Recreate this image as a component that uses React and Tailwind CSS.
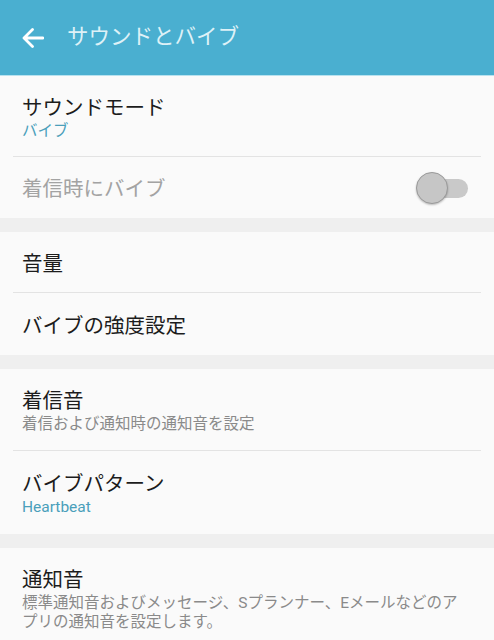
import { useState } from 'react';

const font = { fontFamily: '"Roboto", "Noto Sans CJK JP", sans-serif' };

function Row({ title, sub, subAccent, last, dim, h, children }) {
  return (
    <div className="px-[13px]">
      <div
        className={`flex items-center justify-between ${last ? '' : 'border-b border-[#e3e3e3]'} ${h}`}
      >
        <div className="px-[9px] pt-[3px]">
          <div className={`text-[20.5px] leading-[26px] ${dim ? 'text-[#a3a3a3]' : 'text-[#1c1c1c]'}`}>{title}</div>
          {sub && (
            <div
              className={`text-[15.5px] leading-[19px] mt-[1px] ${subAccent ? 'text-[#4a9fba]' : 'text-[#8a8a8a]'}`}
            >
              {sub}
            </div>
          )}
        </div>
        {children}
      </div>
    </div>
  );
}

function Toggle({ on, onChange }) {
  return (
    <button onClick={() => onChange(!on)} className="relative w-[52px] h-[34px] mr-[13px] shrink-0">
      <span className="absolute left-[15px] right-0 top-[8px] h-[19px] rounded-full bg-[#c9c9c9]" />
      <span className="absolute left-0 top-[1px] w-[32px] h-[32px] rounded-full bg-[#c6c6c6] border border-[#9a9a9a] shadow-[0_1px_2px_rgba(0,0,0,0.25)]" />
    </button>
  );
}

export default function App() {
  const [vibe, setVibe] = useState(false);

  return (
    <div className="w-[494px] h-[640px] overflow-hidden bg-[#efefef]" style={font}>
      <header className="h-[75px] bg-[#4aafd0] flex items-center border-b border-[#b8e2ef] box-content">
        <svg width="22" height="20" viewBox="0 0 22 20" className="ml-[22px]">
          <path d="M21 10H2.5M10.5 1.5L2 10l8.5 8.5" fill="none" stroke="#ffffff" strokeWidth="2.8" strokeLinecap="round" strokeLinejoin="round" />
        </svg>
        <h1 className="ml-[23px] text-[21.5px] text-[#def1f7]">サウンドとバイブ</h1>
      </header>

      <section className="bg-[#fafafa]">
        <Row title="サウンドモード" sub="バイブ" subAccent h="h-[81px]" />
        <Row title="着信時にバイブ" dim last h="h-[61px]">
          <Toggle on={vibe} onChange={setVibe} />
        </Row>
      </section>

      <section className="bg-[#fafafa] mt-[14px]">
        <Row title="音量" h="h-[61px]" />
        <Row title="バイブの強度設定" last h="h-[62px]" />
      </section>

      <section className="bg-[#fafafa] mt-[14px]">
        <Row title="着信音" sub="着信および通知時の通知音を設定" h="h-[82px]" />
        <Row title="バイブパターン" sub="Heartbeat" subAccent last h="h-[83px]" />
      </section>

      <section className="bg-[#fafafa] mt-[14px] h-[120px]">
        <div className="px-[22px] pt-[19px]">
          <div className="text-[20.5px] leading-[26px] text-[#1c1c1c]">通知音</div>
          <div className="text-[15.5px] leading-[19px] mt-[1px] text-[#8a8a8a]">
            標準通知音およびメッセージ、Sプランナー、Eメールなどのア
            <br />
            プリの通知音を設定します。
          </div>
        </div>
      </section>
    </div>
  );
}
